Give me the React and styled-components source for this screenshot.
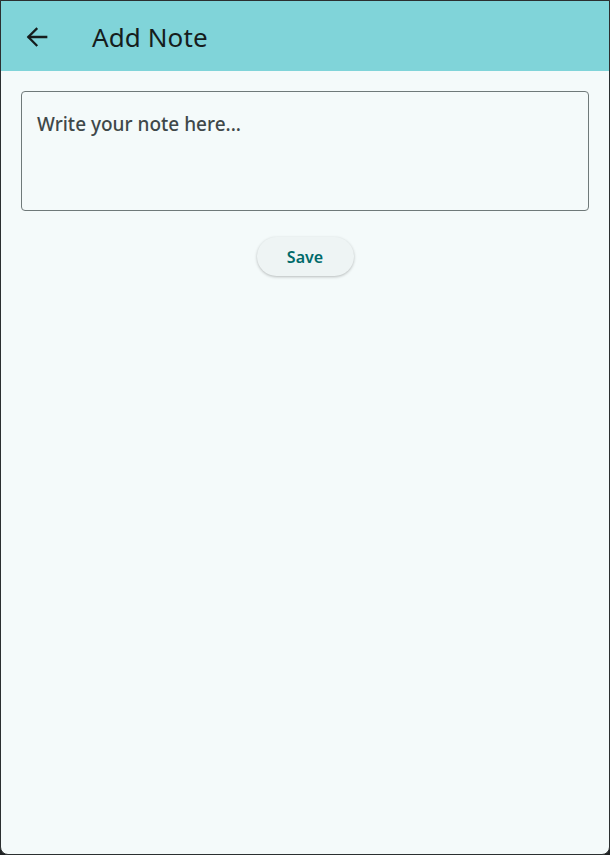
import React from 'react'
import styled, { createGlobalStyle } from 'styled-components'

const GlobalStyle = createGlobalStyle`
html, body {
  margin: 0;
  padding: 0;
  background: #1f2223;
}
* {
  box-sizing: border-box;
}
`

const Window = styled.div`
width: 610px;
height: 855px;
display: flex;
flex-direction: column;
background-color: #f4fafa;
border: 1px solid #2b2f30;
border-radius: 0 0 8px 8px;
overflow: hidden;
font-family: "Noto Sans", "Open Sans", sans-serif;
`

const AppBar = styled.header`
height: 70px;
flex-shrink: 0;
display: flex;
align-items: center;
padding: 2px 0 0 21px;
background-color: #80d4d9;
color: #161d1d;
`

const BackButton = styled.button`
width: 30px;
height: 30px;
display: flex;
justify-content: center;
align-items: center;
padding: 0;
border: none;
background: none;
color: #161d1d;
cursor: pointer;
`

const Title = styled.h1`
margin: 0 0 0 40px;
font-size: 26px;
font-weight: 400;
letter-spacing: 0.1px;
`

const Body = styled.main`
display: flex;
flex-direction: column;
align-items: center;
padding: 20px 20px 0 20px;
`

const NoteField = styled.textarea`
width: 100%;
height: 120px;
resize: none;
padding: 19px 15px;
border: 1px solid #6f7979;
border-radius: 4px;
background: transparent;
font-family: inherit;
font-size: 19px;
font-weight: 500;
color: #161d1d;
outline: none;

&::placeholder {
  color: #3f4849;
}
`

const SaveButton = styled.button`
margin-top: 26px;
width: 97px;
height: 39px;
border: none;
border-radius: 20px;
background-color: #eef4f4;
box-shadow: 0 1px 3px rgba(0, 0, 0, 0.25);
font-family: inherit;
font-size: 16px;
font-weight: 600;
color: #006a6a;
cursor: pointer;
`

const App = () => {
  return (
    <>
      <GlobalStyle />
      <Window>
        <AppBar>
          <BackButton aria-label="Back">
            <svg width="26" height="26" viewBox="0 0 24 24" fill="none" stroke="currentColor" strokeWidth="2.1" strokeLinecap="square">
              <path d="M20.5 12H4.5" />
              <path d="M11.5 4.5L4 12l7.5 7.5" />
            </svg>
          </BackButton>
          <Title>Add Note</Title>
        </AppBar>
        <Body>
          <NoteField placeholder="Write your note here..." />
          <SaveButton>Save</SaveButton>
        </Body>
      </Window>
    </>
  )
}

export default App
